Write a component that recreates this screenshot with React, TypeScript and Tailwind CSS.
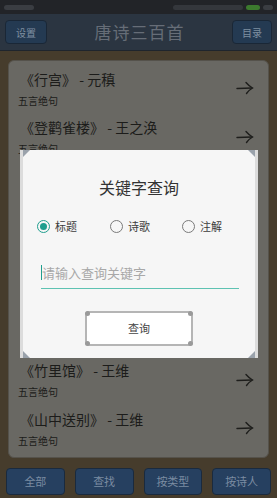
import React from "react";

// Poem list entries (title line + form); the middle ones sit behind the dialog
const poems = [
	{ title: "《行宫》 - 元稹", form: "五言绝句", hidden: false },
	{ title: "《登鹳雀楼》 - 王之涣", form: "五言绝句", hidden: false },
	{ title: "《相思》 - 王维", form: "五言绝句", hidden: true },
	{ title: "《鹿柴》 - 王维", form: "五言绝句", hidden: true },
	{ title: "《杂诗》 - 王维", form: "五言绝句", hidden: true },
	{ title: "《送别》 - 王维", form: "五言绝句", hidden: true },
	{ title: "《竹里馆》 - 王维", form: "五言绝句", hidden: false },
	{ title: "《山中送别》 - 王维", form: "五言绝句", hidden: false },
];

const tabs = ["全部", "查找", "按类型", "按诗人"];

function Arrow() {
	return (
		<svg width="18" height="14" viewBox="0 0 18 14" fill="none" stroke="#1e1e1c" strokeWidth="1.4" strokeLinecap="round">
			<path d="M1 7.5 L16 7" />
			<path d="M10 1.5 Q13 5 16.5 7 Q13 9 10.5 12.5" />
		</svg>
	);
}

function Corner({ className }: { className: string }) {
	return <div className={`absolute w-0 h-0 ${className}`} />;
}

function Radio({ checked, label }: { checked: boolean; label: string }) {
	return (
		<div className="flex items-center gap-[5px]">
			<div className={`w-[13px] h-[13px] rounded-full border-[1.5px] flex items-center justify-center ${checked ? "border-[#1f9e8e]" : "border-[#7a7a7a]"}`}>
				{checked && <div className="w-[7px] h-[7px] rounded-full bg-[#1f9e8e]" />}
			</div>
			<span className="text-[11px] text-[#3c3c3c]">{label}</span>
		</div>
	);
}

export default function App() {
	return (
		<div className="relative w-[277px] h-[498px] overflow-hidden bg-[#463c2c] flex flex-col" style={{ fontFamily: '"Noto Sans CJK SC", "Noto Sans", sans-serif' }}>
			{/* status bar */}
			<div className="h-[14px] bg-[#222428] flex items-center px-[4px] gap-[3px]">
				<div className="w-[30px] h-[5px] bg-[#3a3d42] rounded-sm" />
				<div className="flex-1" />
				<div className="w-[70px] h-[5px] bg-[#34373c] rounded-sm" />
				<div className="w-[14px] h-[5px] bg-[#3c7a2e] rounded-sm" />
				<div className="w-[10px] h-[5px] bg-[#3a3d42] rounded-sm" />
			</div>

			{/* header */}
			<div className="h-[37px] bg-[#2b3541] border-b border-[#1f252d] flex items-center justify-between px-[5px]">
				<div className="w-[42px] h-[24px] rounded-[4px] bg-[#243a52] border border-[#1a2736] flex items-center justify-center text-[10px] text-[#7f8fa0]">设置</div>
				<div className="text-[17px] text-[#666d77] tracking-[1px]">唐诗三百首</div>
				<div className="w-[40px] h-[24px] rounded-[4px] bg-[#243a52] border border-[#1a2736] flex items-center justify-center text-[10px] text-[#7f8fa0]">目录</div>
			</div>

			{/* list card */}
			<div className="mx-[8px] mt-[9px] h-[398px] rounded-[6px] bg-[#696863] border border-[#55524b] pt-[3px] px-[9px] overflow-hidden">
				{poems.map((p) => (
					<div key={p.title} className={`h-[48.6px] flex items-center ${p.hidden ? "invisible" : ""}`}>
						<div className="flex-1 flex flex-col gap-[5px]">
							<div className="text-[14px] leading-[20px] text-[#1c1c1a] pl-[2px]">{p.title}</div>
							<div className="text-[10px] leading-[14px] text-[#1c1c1a]">{p.form}</div>
						</div>
						<div className="pr-[5px]">
							<Arrow />
						</div>
					</div>
				))}
			</div>

			{/* bottom tabs */}
			<div className="mt-[10px] px-[6px] flex gap-[10px]">
				{tabs.map((t) => (
					<div key={t} className="flex-1 h-[27px] rounded-[4px] bg-[#264060] border border-[#1a2a3e] flex items-center justify-center text-[11px] text-[#7b8ca2]">
						{t}
					</div>
				))}
			</div>

			{/* dialog */}
			<div className="absolute left-[20px] top-[150px] w-[238px] h-[208px] bg-[#f6f6f6] border-l-[3px] border-r-[3px] border-[#dcdcdc] flex flex-col items-center">
				<Corner className="left-0 top-0 border-t-[7px] border-r-[7px] border-t-[#9aa2ab] border-r-transparent" />
				<Corner className="right-0 top-0 border-t-[7px] border-l-[7px] border-t-[#9aa2ab] border-l-transparent" />
				<Corner className="left-0 bottom-0 border-b-[7px] border-r-[7px] border-b-[#9aa2ab] border-r-transparent" />
				<Corner className="right-0 bottom-0 border-b-[7px] border-l-[7px] border-b-[#9aa2ab] border-l-transparent" />

				<div className="mt-[26px] text-[16px] leading-[22px] text-[#333333]">关键字查询</div>

				<div className="mt-[20px] w-full flex px-[14px]">
					<div className="w-[73px]"><Radio checked label="标题" /></div>
					<div className="w-[72px]"><Radio checked={false} label="诗歌" /></div>
					<div><Radio checked={false} label="注解" /></div>
				</div>

				<div className="mt-[25px] w-[198px] ml-[1px] h-[29px] border-b-[1.5px] border-[#5ec2b2] flex items-center pb-[2px]">
					<div className="w-[1.5px] h-[15px] bg-[#1f9e8e]" />
					<span className="text-[13px] text-[#a8a8a8]">请输入查询关键字</span>
				</div>

				<div className="relative mt-[22px] w-[108px] h-[35px] bg-white border-2 border-[#b5b5b5] rounded-[4px] flex items-center justify-center text-[11px] text-[#444444]">
					查询
					<div className="absolute -left-[2px] -top-[2px] w-[5px] h-[5px] bg-[#9a9a9a] rounded-sm" />
					<div className="absolute -right-[2px] -top-[2px] w-[5px] h-[5px] bg-[#9a9a9a] rounded-sm" />
					<div className="absolute -left-[2px] -bottom-[2px] w-[5px] h-[5px] bg-[#9a9a9a] rounded-sm" />
					<div className="absolute -right-[2px] -bottom-[2px] w-[5px] h-[5px] bg-[#9a9a9a] rounded-sm" />
				</div>
			</div>
		</div>
	);
}
